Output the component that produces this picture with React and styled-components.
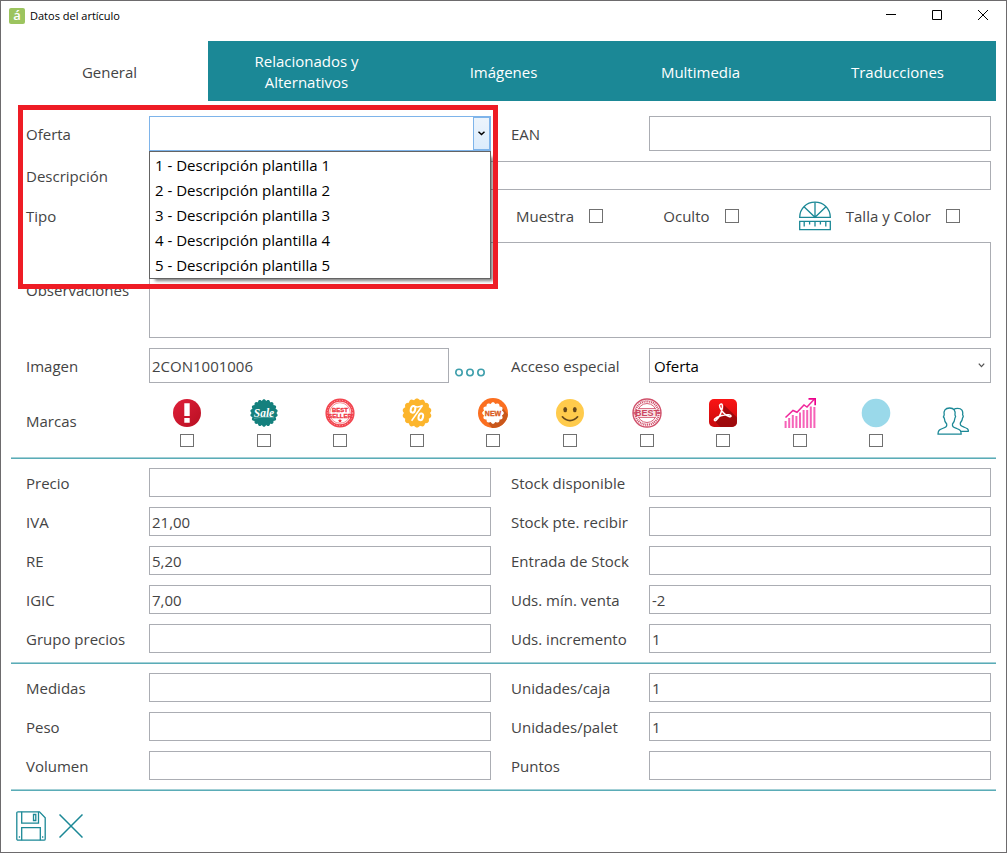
import React, { useState } from 'react'
import styled, { createGlobalStyle } from 'styled-components'

const TEAL = '#1b8896'

const plantillas = [
  '1 - Descripción plantilla 1',
  '2 - Descripción plantilla 2',
  '3 - Descripción plantilla 3',
  '4 - Descripción plantilla 4',
  '5 - Descripción plantilla 5',
]

const tabs = ['General', 'Relacionados y Alternativos', 'Imágenes', 'Multimedia', 'Traducciones']

const precios = [
  ['Precio', '', 'Stock disponible', ''],
  ['IVA', '21,00', 'Stock pte. recibir', ''],
  ['RE', '5,20', 'Entrada de Stock', ''],
  ['IGIC', '7,00', 'Uds. mín. venta', '-2'],
  ['Grupo precios', '', 'Uds. incremento', '1'],
]

const medidas = [
  ['Medidas', '', 'Unidades/caja', '1'],
  ['Peso', '', 'Unidades/palet', '1'],
  ['Volumen', '', 'Puntos', ''],
]

// points of a badge with a wavy edge
const badge = (teeth, outer, inner) => {
  const pts = []
  const steps = teeth * 8
  for (let i = 0; i < steps; i++) {
    const a = (i / steps) * Math.PI * 2
    const r = inner + (outer - inner) * Math.abs(Math.cos((a * teeth) / 2))
    pts.push(`${(15 + r * Math.sin(a)).toFixed(2)},${(15 - r * Math.cos(a)).toFixed(2)}`)
  }
  return pts.join(' ')
}

const AlertIcon = () => (
  <svg width="30" height="30" viewBox="0 0 30 30" aria-hidden="true">
    <defs>
      <linearGradient id="alert" x1="0" y1="0" x2="1" y2="1">
        <stop offset="0" stopColor="#e0203a" />
        <stop offset="1" stopColor="#b80f22" />
      </linearGradient>
    </defs>
    <circle cx="15" cy="15" r="14" fill="url(#alert)" />
    <path d="M12.3 5.3h5.4v12.6h-5.4zM12.3 20h5.4v4.8h-5.4z" fill="#fff" />
  </svg>
)

const SaleIcon = () => (
  <svg width="30" height="30" viewBox="0 0 30 30" aria-hidden="true">
    <polygon points={badge(18, 13.8, 12.3)} fill="#14807d" />
    <text x="15" y="18.5" textAnchor="middle" fontFamily="'Liberation Serif', serif" fontStyle="italic" fontWeight="bold" fontSize="11.5" fill="#fff">Sale</text>
    <path d="M5 20.5c6-1.6 13-1.8 20-.6" stroke="#7fc0bd" strokeWidth=".6" fill="none" />
  </svg>
)

const BestSellerIcon = () => (
  <svg width="30" height="30" viewBox="0 0 30 30" aria-hidden="true">
    <circle cx="15" cy="15" r="12.9" fill="none" stroke="#f2454f" strokeWidth="3.4" />
    <circle cx="15" cy="15" r="12.7" fill="none" stroke="#fbb9bd" strokeWidth="1" strokeDasharray="1 1.8" />
    <circle cx="15" cy="15" r="10.3" fill="none" stroke="#f2454f" strokeWidth=".6" />
    <g fill="#ef3340" stroke="#ef3340" strokeWidth=".3" fontFamily="'Liberation Sans Narrow', 'Liberation Sans', sans-serif" fontWeight="bold" textAnchor="middle">
      <text x="15" y="13.5" fontSize="6">BEST</text>
      <text x="15" y="19.5" fontSize="6">SELLER</text>
    </g>
    <path d="M15 20.6l.6 1.3 1.5.2-1.1 1 .3 1.5-1.3-.7-1.3.7.3-1.5-1.1-1 1.5-.2z" fill="#ef3340" />
  </svg>
)

const PercentIcon = () => (
  <svg width="30" height="30" viewBox="0 0 30 30" aria-hidden="true">
    <polygon points={badge(14, 14.6, 13)} fill="#fcb52c" />
    <g fill="none" stroke="#fff" strokeWidth="2">
      <ellipse cx="11" cy="11.3" rx="2.2" ry="3.4" transform="rotate(15 11 11.3)" />
      <ellipse cx="18.8" cy="18.8" rx="2.2" ry="3.4" transform="rotate(15 18.8 18.8)" />
      <path d="M20.6 7.3L9.6 22.8M12.4 8.4c3 1 5.4.6 8.2-1.1" strokeWidth="1.5" />
    </g>
  </svg>
)

const NewIcon = () => (
  <svg width="30" height="30" viewBox="0 0 30 30" aria-hidden="true">
    <circle cx="15" cy="15" r="15" fill="#fb6f20" />
    <path d="M8 22l6 7.9a15 15 0 0 0 15.9-13.4L23 8z" fill="#c9571b" />
    <polygon points={badge(12, 10.8, 9.2)} fill="#fff" />
    <text x="15" y="17.5" textAnchor="middle" fontFamily="'Liberation Sans Narrow', 'Liberation Sans', sans-serif" fontWeight="bold" fontSize="7" fill="#d95a20" stroke="#d95a20" strokeWidth=".3">NEW</text>
  </svg>
)

const SmileIcon = () => (
  <svg width="30" height="30" viewBox="0 0 30 30" aria-hidden="true">
    <circle cx="15" cy="15" r="14" fill="#ffcb4c" />
    <ellipse cx="10.2" cy="11.6" rx="1.9" ry="2.7" fill="#65471b" />
    <ellipse cx="19.8" cy="11.6" rx="1.9" ry="2.7" fill="#65471b" />
    <path d="M7.4 18.8c4.2 5 11 5 15.2 0" fill="none" stroke="#65471b" strokeWidth="1.7" strokeLinecap="round" />
  </svg>
)

const StampIcon = () => (
  <svg width="30" height="30" viewBox="0 0 30 30" aria-hidden="true">
    <g fill="none" stroke="#d0506a">
      <circle cx="15" cy="15" r="14" strokeWidth="1.4" />
      <circle cx="15" cy="15" r="11.7" strokeWidth="2.2" strokeDasharray="1.1 .8" />
      <circle cx="15" cy="15" r="9.5" strokeWidth=".9" />
      <path d="M6.5 10.6h17M6.5 19.4h17" strokeWidth=".9" />
      <path d="M1 15h4M25 15h4" strokeWidth="1.4" />
    </g>
    <path d="M5.4 11.4h19.2v7.2H5.4z" fill="#f8e1e5" />
    <text x="15" y="18.2" textAnchor="middle" fontFamily="'Liberation Sans Narrow', 'Liberation Sans', sans-serif" fontWeight="bold" fontSize="9" fill="#cb4560">BEST</text>
  </svg>
)

const PdfIcon = () => (
  <svg width="30" height="30" viewBox="0 0 30 30" aria-hidden="true">
    <defs>
      <linearGradient id="pdf" x1="0" y1="0" x2="0" y2="1">
        <stop offset="0" stopColor="#fa1414" />
        <stop offset="1" stopColor="#c90a0d" />
      </linearGradient>
    </defs>
    <rect x="1" y="1" width="28" height="28" rx="5" fill="url(#pdf)" />
    <path d="M7 23.5l5.5 5.5H24a5 5 0 0 0 5-5v-4.5L16 7l-1 9z" fill="#8e0a0c" opacity=".75" />
    <path d="M12.2 6.4c1.8-1.2 2.6.9 2.1 3.4-.7 4.4-3.4 9.7-6.1 12.3-1.3 1.2-2.5.2-1.5-1.1 2.3-2.7 9.5-4.7 14.3-4.3 2.8.3 2.6 2.4.4 2.1-3.7-.6-8.3-6-9.6-9.9-.5-1.4-.3-2.2.4-2.5z" fill="none" stroke="#fff" strokeWidth="1.5" />
  </svg>
)

const ChartIcon = () => (
  <svg width="32" height="30" viewBox="0 0 32 30" aria-hidden="true">
    {[7, 10, 13, 12, 15.5, 18, 18, 21.5, 21].map((h, i) => (
      <rect key={i} x={0.6 + i * 3.6} y={30 - h} width="2" height={h} fill="#f663b8" />
    ))}
    <path d="M1.5 19.500l7.500-7 4 1.800 7-7.300 3 2 7-7.500" fill="none" stroke="#f0279b" strokeWidth="1.500" />
    <path d="M24.500.8h6.700v6.400" fill="none" stroke="#ec008c" strokeWidth="1.700" />
  </svg>
)

const CircleIcon = () => (
  <svg width="30" height="30" viewBox="0 0 30 30" aria-hidden="true">
    <circle cx="15" cy="15" r="14.3" fill="#9ad9ea" />
  </svg>
)

const PeopleIcon = () => (
  <svg width="32" height="28" viewBox="0 0 32 28" fill="none" stroke={TEAL} strokeWidth="1.3" strokeLinejoin="round" aria-hidden="true">
    <path d="M1 27.2c.1-3.800 1-4.300 4.500-5.700 3.500-1.300 4.600-1.700 4.200-4.500C7.800 15 7.400 13.400 7.300 11.200c-.9-1-.9-2.300-.1-3.200C6.300 3.500 8.300 1 12.600 1s6.200 2.500 5.400 7c.8.9.7 2.200-.1 3.200-.2 2.200-.6 3.800-2.400 5.800-.4 2.800.8 3.200 4.200 4.500 3.500 1.400 4.300 1.900 4.500 5.700z" />
    <path d="M16.500 2.600c1.300-.9 2.600-1.200 4.100-1.200 4.200 0 5.700 2.300 5 6.500.8.8.7 2.100 0 3-.2 2-.7 3.200-2.200 4.900-.5 2.600.6 3.200 3.700 4.400 3.100 1.200 4.200 1.600 4.300 4.100h-7.700" />
  </svg>
)

const ProtractorIcon = () => (
  <svg width="32" height="30" viewBox="0 0 32 30" fill="none" stroke={TEAL} strokeWidth="1.3" aria-hidden="true">
    <path d="M.7 16.3C.7 7.500 7.500 1.200 16 1.200s15.300 6.300 15.300 15.100z" />
    <path d="M16 1.200v15.100M5 5.800l11 10.500L27 5.800" />
    <path d="M.7 20.4h30.600v8.300H.7zM5.200 20.4v5M10.600 20.4v3M16 20.4v5M21.400 20.4v3M26.800 20.4v5" />
  </svg>
)

const SaveIcon = () => (
  <svg width="30" height="30" viewBox="0 0 30 30" fill="none" stroke={TEAL} strokeWidth="1.3" aria-hidden="true">
    <path d="M2 .8h21.500l5.700 6V28a1.200 1.200 0 0 1-1.200 1.200H2A1.200 1.200 0 0 1 .8 28V2A1.200 1.200 0 0 1 2 .8z" />
    <path d="M5.700.8v11.400h16.800V.8M5.700 29.200V16.600h18.600v12.600" />
    <path d="M17.500 3.500h2.300v6h-2.300zM2.800 26h1.300M26 26h1.300" />
  </svg>
)

const CancelIcon = () => (
  <svg width="24" height="24" viewBox="0 0 24 24" stroke={TEAL} strokeWidth="1.5" aria-hidden="true">
    <path d="M.5.5l23 23M23.5.5l-23 23" />
  </svg>
)

const marcas = [
  ['Importante', AlertIcon],
  ['Oferta', SaleIcon],
  ['Más vendido', BestSellerIcon],
  ['Descuento', PercentIcon],
  ['Nuevo', NewIcon],
  ['Recomendado', SmileIcon],
  ['Calidad', StampIcon],
  ['PDF', PdfIcon],
  ['Tendencia', ChartIcon],
  ['Otros', CircleIcon],
]

const Fields = ({ rows }) => (
  <Section>
    {rows.map(([left, leftValue, right, rightValue]) => (
      <React.Fragment key={left}>
        <Label htmlFor={left}>{left}</Label>
        <Input id={left} defaultValue={leftValue} />
        <Label htmlFor={right}>{right}</Label>
        <Input id={right} defaultValue={rightValue} />
      </React.Fragment>
    ))}
  </Section>
)

const App = () => {
  const [tab, setTab] = useState('General')
  const [oferta, setOferta] = useState('')

  return (
    <Window>
      <GlobalStyle />
      <TitleBar>
        <Logo aria-hidden="true">á</Logo>
        <Title>Datos del artículo</Title>
        <WindowButton type="button" aria-label="Minimizar">
          <svg width="10" height="10" stroke="#000"><path d="M0 4.5h10" /></svg>
        </WindowButton>
        <WindowButton type="button" aria-label="Maximizar">
          <svg width="10" height="10" stroke="#000" fill="none"><path d="M.5.5h9v9h-9z" /></svg>
        </WindowButton>
        <WindowButton type="button" aria-label="Cerrar">
          <svg width="10" height="10" stroke="#000"><path d="M0 0l10 10M10 0L0 10" /></svg>
        </WindowButton>
      </TitleBar>
      <Content>
        <Tabs role="tablist">
          {tabs.map((name) => (
            <Tab key={name} type="button" role="tab" aria-selected={name === tab} $active={name === tab} onClick={() => setTab(name)}>
              <span>{name}</span>
            </Tab>
          ))}
        </Tabs>

        <Section $first>
          <Label htmlFor="oferta">Oferta</Label>
          <Combo>
            <ComboSelect id="oferta" value={oferta} onChange={(e) => setOferta(e.target.value)}>
              <option value="" />
              {plantillas.map((p) => <option key={p}>{p}</option>)}
            </ComboSelect>
            <ComboArrow>
              <svg width="7" height="5" fill="none" stroke="#000" strokeWidth="1.5"><path d="M.5.8l3 2.7 3-2.7" /></svg>
            </ComboArrow>
            <List role="listbox" aria-label="Plantillas">
              {plantillas.map((p) => (
                <Option key={p} role="option" aria-selected={p === oferta} onClick={() => setOferta(p)}>{p}</Option>
              ))}
            </List>
          </Combo>
          <Label htmlFor="ean">EAN</Label>
          <Input id="ean" $tall />

          <Label htmlFor="descripcion">Descripción</Label>
          <Wide><Input id="descripcion" /></Wide>

          <Label htmlFor="tipo">Tipo</Label>
          <Input id="tipo" />
          <Checks>
            <CheckLabel>Muestra<Checkbox type="checkbox" /></CheckLabel>
            <CheckLabel>Oculto<Checkbox type="checkbox" /></CheckLabel>
            <CheckLabel><ProtractorIcon />Talla y Color<Checkbox type="checkbox" /></CheckLabel>
          </Checks>

          <Label htmlFor="observaciones">Observaciones</Label>
          <Wide><TextArea id="observaciones" /></Wide>

          <Label htmlFor="imagen">Imagen</Label>
          <WithButton>
            <Input id="imagen" $tall defaultValue="2CON1001006" />
            <IconButton type="button" aria-label="Buscar imagen">
              <svg width="30" height="9" fill="none" stroke="#3f9fac" strokeWidth="1.6">
                <circle cx="4" cy="4.5" r="3.2" />
                <circle cx="15" cy="4.5" r="3.2" />
                <circle cx="26" cy="4.5" r="3.2" />
              </svg>
            </IconButton>
          </WithButton>
          <Label htmlFor="acceso">Acceso especial</Label>
          <SelectBox>
            <Select id="acceso" defaultValue="Oferta">
              <option>Oferta</option>
            </Select>
            <svg width="7" height="5" fill="none" stroke="#555" strokeWidth="1.3"><path d="M.8.6l2.700 3 2.700-3" /></svg>
          </SelectBox>

          <Label as="span">Marcas</Label>
          <Marks>
            {marcas.map(([name, Icon]) => (
              <Mark key={name}>
                <Icon />
                <Checkbox type="checkbox" aria-label={name} $short />
              </Mark>
            ))}
            <IconButton type="button" aria-label="Clientes" $center><PeopleIcon /></IconButton>
          </Marks>
          <Highlight />
        </Section>
        <Rule />
        <Fields rows={precios} />
        <Rule />
        <Fields rows={medidas} />
        <Rule />

        <Toolbar>
          <IconButton type="button" aria-label="Guardar"><SaveIcon /></IconButton>
          <IconButton type="button" aria-label="Cancelar"><CancelIcon /></IconButton>
        </Toolbar>
      </Content>
    </Window>
  )
}

const GlobalStyle = createGlobalStyle`
  * {
    box-sizing: border-box;
  }
  body {
    margin: 0;
    background: #fff;
  }
  body, button, input, select, textarea {
    font-family: "Open Sans", "Noto Sans", sans-serif;
    font-size: 15px;
    color: #444;
  }
  svg {
    display: block;
    flex: none;
  }
`

const Window = styled.div`
  min-height: 100vh;
  border: 1px solid #6d6b6d;
  background: #fff;
`

const TitleBar = styled.header`
  display: flex;
  align-items: center;
  height: 30px;
  padding-left: 8px;
`

const Logo = styled.span`
  width: 16px;
  height: 16px;
  border-radius: 2px;
  background: #9cc45f;
  color: #fff;
  font-size: 13px;
  font-weight: 600;
  line-height: 14px;
  text-align: center;
`

const Title = styled.h1`
  flex: 1;
  margin: 0 0 0 5px;
  padding-bottom: 2px;
  font-size: 11px;
  font-weight: 400;
  color: #000;
`

const WindowButton = styled.button`
  display: flex;
  align-items: center;
  justify-content: center;
  width: 46px;
  height: 30px;
  padding: 0 0 2px;
  border: 0;
  background: none;
`

const Content = styled.main`
  padding: 10px;
`

const Tabs = styled.div`
  display: grid;
  grid-template-columns: repeat(5, 1fr);
`

const Tab = styled.button`
  display: flex;
  align-items: center;
  justify-content: center;
  height: 60px;
  padding: 2px 40px 0;
  border: 0;
  line-height: 21px;
  background: ${({ $active }) => ($active ? '#fff' : TEAL)};
  color: ${({ $active }) => ($active ? '#444' : '#fff')};
`

const Section = styled.section`
  position: relative;
  display: grid;
  grid-template-columns: 103px minmax(0, 1fr) 118px minmax(0, 1fr);
  gap: 10px 20px;
  align-items: center;
  padding: ${({ $first }) => ($first ? '15px' : '9px')} 5px 9px 15px;
`

const Label = styled.label`
  white-space: nowrap;
  line-height: 20px;
`

const Input = styled.input`
  width: 100%;
  min-width: 0;
  height: ${({ $tall }) => ($tall ? '35px' : '29px')};
  padding: 0 2px;
  border: 1px solid #abadb3;
  background: #fff;
  outline: none;
`

const TextArea = styled.textarea`
  display: block;
  width: 100%;
  height: 96px;
  padding: 2px;
  border: 1px solid #abadb3;
  outline: none;
  resize: none;
`

const Wide = styled.div`
  display: flex;
  grid-column: 2 / 5;
`

const Combo = styled.div`
  position: relative;
  display: flex;
  height: 35px;
  border: 1px solid #7eb4ea;
`

const ComboSelect = styled.select`
  flex: 1;
  min-width: 0;
  padding: 0 4px;
  border: 0;
  background: #fff;
  color: #000;
  appearance: none;
  outline: none;
`

const ComboArrow = styled.span`
  display: flex;
  align-items: center;
  justify-content: center;
  width: 17px;
  border: 1px solid #7eb4ea;
  background: linear-gradient(#ecf4fc, #dcecfc);
  pointer-events: none;
`

const List = styled.ul`
  position: absolute;
  z-index: 1;
  top: 34px;
  left: -1px;
  right: -1px;
  margin: 0;
  padding: 0 0 1px;
  border: 1px solid #646464;
  background: #fff;
  box-shadow: 4px 4px 3px -2px rgba(0, 0, 0, 0.5);
  list-style: none;
`

const Option = styled.li`
  padding: 1px 5px 0;
  line-height: 24px;
  white-space: nowrap;
  color: #000;
  cursor: default;
`

const Checks = styled.div`
  display: flex;
  align-items: center;
  justify-content: space-between;
  grid-column: 3 / 5;
  height: 32px;
  padding: 0 31px 0 5px;
`

const CheckLabel = styled.label`
  display: flex;
  align-items: center;
  gap: 15px;
  white-space: nowrap;
`

const Checkbox = styled.input`
  width: 14px;
  height: ${({ $short }) => ($short ? '13px' : '14px')};
  margin: 0;
  border: 1px solid #707070;
  background: #fff;
  appearance: none;

  &:checked {
    background: #707070;
    box-shadow: inset 0 0 0 2px #fff;
  }
`

const WithButton = styled.div`
  display: flex;
  align-items: center;
  gap: 6px;
  padding-right: 6px;

  button {
    padding-top: 14px;
  }
`

const IconButton = styled.button`
  display: flex;
  padding: 0;
  border: 0;
  background: none;
  cursor: pointer;
  ${({ $center }) => $center && 'align-self: center; justify-self: center;'}
`

const SelectBox = styled.div`
  display: flex;
  align-items: center;
  height: 35px;
  padding-right: 5px;
  border: 1px solid #abadb3;
`

const Select = styled.select`
  flex: 1;
  height: 33px;
  padding: 0 4px;
  border: 0;
  background: #fff;
  color: #000;
  appearance: none;
  outline: none;
`

const Marks = styled.div`
  display: grid;
  grid-column: 2 / 5;
  grid-template-columns: repeat(11, 1fr);
`

const Mark = styled.div`
  display: flex;
  flex-direction: column;
  align-items: center;
  gap: 6px;
  padding: 5px 0 1px;
`

const Highlight = styled.div`
  position: absolute;
  z-index: 2;
  grid-column: 1 / 3;
  top: 4px;
  left: -8px;
  right: -7px;
  height: 184px;
  border: 5px solid #ee1c25;
  pointer-events: none;
`

const Rule = styled.hr`
  height: 2px;
  margin: 0;
  border: 0;
  background: linear-gradient(#a3d0d6 50%, #5aacb7 50%);
`

const Toolbar = styled.footer`
  display: flex;
  align-items: center;
  gap: 13px;
  padding: 20px 5px 0;
`

export default App
